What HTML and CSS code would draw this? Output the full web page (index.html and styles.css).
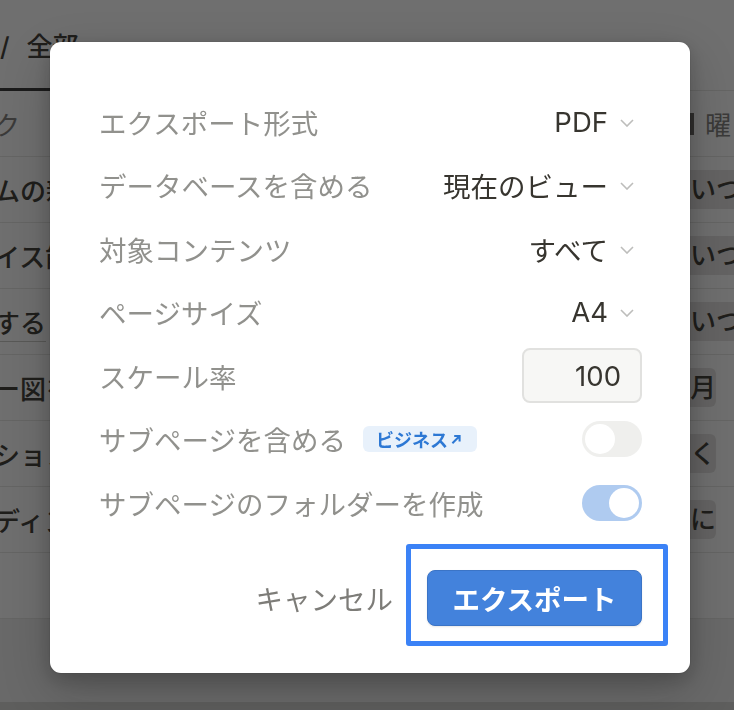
FILE: index.html
```html
<!DOCTYPE html>
<html lang="ja">
<head>
    <meta charset="UTF-8">
    <meta name="viewport" content="width=device-width, initial-scale=1.0">
    <title>エクスポート</title>
    <link rel="stylesheet" href="styles.css">
</head>
<body>
    <div class="page">
        <div class="tab-bar">
            <div class="tab">/ 全部</div>
        </div>
        <div class="table">
            <div class="row head">
                <div class="cell-title">ク</div>
                <div class="cell-day"><span class="day-icon"></span>曜</div>
            </div>
            <div class="row">
                <div class="cell-title">ムの新</div>
                <div class="cell-day"><span class="tag wide">いつでも</span></div>
            </div>
            <div class="row">
                <div class="cell-title">イス能</div>
                <div class="cell-day"><span class="tag wide">いつでも</span></div>
            </div>
            <div class="row">
                <div class="cell-title"><span class="link">する</span></div>
                <div class="cell-day"><span class="tag wide">いつでも</span></div>
            </div>
            <div class="row">
                <div class="cell-title">ー図を</div>
                <div class="cell-day"><span class="tag">月</span></div>
            </div>
            <div class="row">
                <div class="cell-title">ション</div>
                <div class="cell-day"><span class="tag">く</span></div>
            </div>
            <div class="row">
                <div class="cell-title">ディン</div>
                <div class="cell-day"><span class="tag">に</span></div>
            </div>
            <div class="row empty"></div>
        </div>
        <div class="page-foot"></div>
    </div>

    <div class="overlay"></div>

    <div class="dialog">
        <div class="option">
            <span class="label">エクスポート形式</span>
            <span class="select">PDF<svg class="chevron" viewBox="0 0 14 8"><path d="M1 1l6 6 6-6"/></svg></span>
        </div>
        <div class="option">
            <span class="label">データベースを含める</span>
            <span class="select">現在のビュー<svg class="chevron" viewBox="0 0 14 8"><path d="M1 1l6 6 6-6"/></svg></span>
        </div>
        <div class="option">
            <span class="label">対象コンテンツ</span>
            <span class="select">すべて<svg class="chevron" viewBox="0 0 14 8"><path d="M1 1l6 6 6-6"/></svg></span>
        </div>
        <div class="option">
            <span class="label">ページサイズ</span>
            <span class="select">A4<svg class="chevron" viewBox="0 0 14 8"><path d="M1 1l6 6 6-6"/></svg></span>
        </div>
        <div class="option">
            <span class="label">スケール率</span>
            <input class="scale-input" type="text" value="100">
        </div>
        <div class="option">
            <span class="label">サブページを含める<span class="badge">ビジネス<svg viewBox="0 0 10 10"><path d="M2 8.5L8 2.5M3.5 2.5H8V7"/></svg></span></span>
            <span class="toggle"></span>
        </div>
        <div class="option">
            <span class="label">サブページのフォルダーを作成</span>
            <span class="toggle on"></span>
        </div>
        <div class="dialog-footer">
            <button class="cancel-button">キャンセル</button>
            <div class="export-wrap">
                <button class="export-button">エクスポート</button>
                <span class="highlight"></span>
            </div>
        </div>
    </div>
</body>
</html>
```

FILE: styles.css
```css
* {
    margin: 0;
    padding: 0;
    box-sizing: border-box;
    font-family: 'Inter', 'Noto Sans CJK JP', sans-serif;
}

body {
    width: 734px;
    height: 710px;
    overflow: hidden;
    background-color: #ffffff;
    color: #37352f;
}

/* 背景のデータベースページ */
.page {
    height: 710px;
    display: flex;
    flex-direction: column;
}

.tab-bar {
    height: 91px;
    border-bottom: 1px solid #e6e6e4;
}

.tab {
    width: 86px;
    height: 91px;
    padding-top: 30px;
    font-size: 26px;
    font-weight: 500;
    color: #37352f;
    border-bottom: 3px solid #2f2f2f;
    line-height: 34px;
    word-spacing: 10px;
    white-space: nowrap;
}

.table {
    display: flex;
    flex-direction: column;
}

.row {
    height: 66px;
    display: flex;
    justify-content: space-between;
    align-items: center;
    border-bottom: 1px solid #e6e6e4;
    font-size: 26px;
    font-weight: 500;
}

.row.head {
    color: #7d7c78;
    font-weight: 400;
}

.cell-title {
    margin-left: -6px;
    white-space: nowrap;
}

.link {
    border-bottom: 1px solid #c8c7c4;
    padding-bottom: 2px;
}

.cell-day {
    width: 44px;
    white-space: nowrap;
    display: flex;
    align-items: center;
}

.day-icon {
    width: 4px;
    height: 22px;
    background-color: #5f5e5a;
    margin-right: 11px;
}

.tag {
    background-color: #e3e2e0;
    border-radius: 6px;
    padding: 2px 0 2px 8px;
    margin-left: -8px;
    line-height: 35px;
}

.row.empty {
    height: 66px;
}

.page-foot {
    flex: 1;
    background-color: #f1f1ef;
    border-bottom: 8px solid #d5d5d3;
}

.overlay {
    position: fixed;
    inset: 0;
    background-color: rgba(15, 15, 15, 0.6);
}

/* ダイアログ */
.dialog {
    position: absolute;
    left: 50px;
    top: 42px;
    width: 640px;
    height: 631px;
    background-color: white;
    border-radius: 11px;
    box-shadow: 0 0 0 1px rgba(15, 15, 15, 0.05), 0 6px 18px rgba(15, 15, 15, 0.2), 0 18px 50px rgba(15, 15, 15, 0.2);
    padding: 48px 48px 0 49px;
}

.option {
    height: 63.5px;
    display: flex;
    justify-content: space-between;
    align-items: center;
}

.label {
    display: flex;
    align-items: center;
    font-size: 27.5px;
    color: #91918d;
    white-space: nowrap;
}

.select {
    display: flex;
    align-items: center;
    font-size: 27.5px;
    color: #37352f;
    margin-right: 8px;
}

.chevron {
    width: 14px;
    height: 8px;
    margin-left: 12px;
    margin-top: 2px;
    fill: none;
    stroke: #bdbdbb;
    stroke-width: 1.6;
}

.scale-input {
    width: 120px;
    height: 55px;
    border: 2px solid #e1e1df;
    border-radius: 8px;
    background-color: #f7f7f5;
    font-size: 27.5px;
    color: #37352f;
    text-align: right;
    padding-right: 19px;
    outline: none;
}

.badge {
    display: flex;
    align-items: center;
    margin-left: 17px;
    height: 26px;
    padding: 0 15px 0 13px;
    background-color: #e8f1fb;
    border-radius: 6px;
    color: #2d78d4;
    font-size: 18px;
    font-weight: 600;
}

.badge svg {
    width: 12px;
    height: 12px;
    margin-left: 2px;
    fill: none;
    stroke: #2d78d4;
    stroke-width: 1.7;
}

.toggle {
    position: relative;
    width: 60px;
    height: 36px;
    border-radius: 18px;
    background-color: #efefed;
}

.toggle::after {
    content: '';
    position: absolute;
    top: 3px;
    left: 3px;
    width: 30px;
    height: 30px;
    border-radius: 50%;
    background-color: white;
}

.toggle.on {
    background-color: #afcbf0;
}

.toggle.on::after {
    left: 27px;
}

.dialog-footer {
    display: flex;
    justify-content: flex-end;
    align-items: center;
    gap: 34px;
    margin-top: 35px;
}

.cancel-button {
    background: none;
    border: none;
    font-size: 27.5px;
    color: #7d7c78;
}

.export-wrap {
    position: relative;
}

.export-button {
    display: block;
    width: 215px;
    height: 56px;
    background-color: #4382dc;
    border: 1px solid #3b74c6;
    border-radius: 8px;
    color: white;
    font-size: 27.5px;
    font-weight: 600;
    box-shadow: 0 1px 2px rgba(15, 15, 15, 0.1);
}

.highlight {
    position: absolute;
    left: -21px;
    top: -26px;
    right: -26px;
    bottom: -20px;
    border: 5px solid #3b82f6;
    border-radius: 3px;
}
```
